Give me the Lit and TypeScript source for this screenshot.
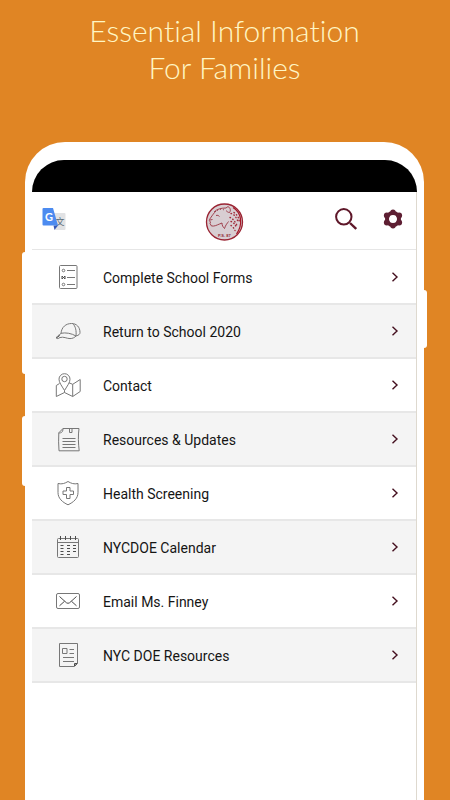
import { LitElement, html, svg, css } from "lit";
import { customElement, property } from "lit/decorators.js";

const icons: Record<string, unknown> = {
  forms: svg`
    <rect x="4.500" y="1.500" width="17.500" height="23" rx="1"/>
    <circle cx="8.500" cy="6.500" r="1.300"/><circle cx="8.500" cy="20.500" r="1.300"/>
    <path d="M12 6.500h8M12 13.500h8M12 20.500h8"/>
    <path class="dark" d="M7 12l3 3M10 12l-3 3M7 12v3M10 12v3"/>`,
  cap: svg`
    <path d="M6 15.500C6.500 9 11 5.500 16.500 5.500c5 0 8.500 3.500 8.500 9 0 1.500-1 2.700-4 3.500"/>
    <path d="M6 15.300c4.500-1 10.500 0 15 2.700-1.500 1.600-3.500 2.600-6 2.600-3.500 0-6-2.300-10.500-1"/>
    <path d="M6 15.500c-2 1.300-4 2.700-4.800 4.500.7 1 2.300.7 3.600-.4"/>
    <path d="M17.500 5.500c3.200 2.500 4 7.500 3.500 12.500"/>
    <path class="dark" d="M1.800 19.700l3-2.300"/>`,
  map: svg`
    <path d="M9.500 18.500C6.500 13.500 4 10.500 4 7.200a5.500 5.500 0 0 1 11 0c0 3.300-2.500 6.300-5.500 11.300z"/>
    <circle cx="9.500" cy="7" r="2.700"/>
    <path d="M4.500 11.500L1.300 13.500v11l8.200-4 8.200 4 7.500-5V7.500l-7.500 4.800-3.700-1.500M9.500 18.500v2M17.700 12.300v12.200"/>`,
  note: svg`
    <path d="M8 2.500h16c-1 7-.7 15 .2 22.300H4c-.5-6-.5-12-.2-18z"/>
    <path d="M3.800 7C6 7 8 6.500 8 2.500M14.500 3v3.500h2.500V2.500"/>
    <path d="M7.500 12.500h13M7.500 15.500h13M7.500 18.500h13M7.500 21.500h13"/>`,
  shield: svg`
    <path d="M3 3.500c4 1 7-.2 10-2 3 1.800 6 3 10 2v9c0 6-4.500 9.700-10 12.300C7.500 22.200 3 18.500 3 12.500z"/>
    <path d="M11.500 7.500h3.500v3.500h3.500v3.500H15V18.500h-3.500v-4H8V11h3.500z"/>`,
  calendar: svg`
    <rect x="2.500" y="4.500" width="21" height="19" rx="1"/>
    <path d="M2.500 8.500h21"/>
    <path class="dark" d="M5.500 2v4M10.500 2v4M15.500 2v4M20.500 2v4M5.500 11.500h3M12 11.500h3M18 11.500h3M5.500 14.500h3M12 14.500h3M18 14.500h3M5.500 17.500h3M12 17.500h3M18 17.500h3M5.500 20.500h3M12 20.500h3"/>`,
  mail: svg`
    <rect x="1.500" y="5.500" width="23" height="15" rx="1.500"/>
    <path class="dark" d="M4.500 8.500l7 6.300q1.500 1 3 0l7-6.300M4.500 17.800l5-4.500M21.500 17.800l-5-4.500"/>`,
  page: svg`
    <path d="M4.500 1.500h18v20l-3 3h-15z"/>
    <rect x="7.500" y="6.500" width="4.500" height="5"/>
    <path d="M14.500 7.500h4.500M14.500 11.500h4.500M8 15.500h11M8 19.500h11"/>
    <path class="dark" d="M19.500 24v-2.500h2.500z"/>`,
};

@customElement("menu-row")
export class MenuRow extends LitElement {
  @property() icon = "";
  @property() label = "";

  static styles = css`
    :host { display: block; }
    .row {
      display: flex;
      align-items: center;
      box-sizing: border-box;
      height: 54px;
      padding: 0 16px 0 23px;
      border-bottom: 2px solid #e7e7e7;
      color: #151515;
      text-decoration: none;
      font: 14px/20px Roboto, "Liberation Sans", sans-serif;
    }
    .icon {
      flex: none;
      width: 26px;
      height: 26px;
      margin-right: 22px;
      fill: none;
      stroke: #777;
      stroke-width: 1;
      stroke-linejoin: round;
    }
    .icon .dark { stroke: #4c4c4c; }
    .label { flex: 1; padding-top: 2px; }
    .chevron {
      flex: none;
      width: 10px;
      height: 12px;
      fill: none;
      stroke: #45101f;
      stroke-width: 1.4;
    }
  `;

  render() {
    return html`<a class="row" href="#">
      <svg class="icon" viewBox="0 0 26 26" aria-hidden="true">${icons[this.icon]}</svg>
      <span class="label">${this.label}</span>
      <svg class="chevron" viewBox="0 0 10 12" aria-hidden="true"><path d="M2.500 1.800L7 6l-4.500 4.200"/></svg>
    </a>`;
  }
}

@customElement("app-root")
export class AppRoot extends LitElement {
  static styles = css`
    :host {
      display: flex;
      flex-direction: column;
      box-sizing: border-box;
      min-height: 100vh;
      padding: 0 26px 0 25px;
      background: #e08524;
    }
    .title {
      margin: 0;
      padding: 12px 0 56px;
      color: #fff6c4;
      font: 300 30px/37px Lato, "Open Sans", sans-serif;
      font-variant-ligatures: none;
      text-align: center;
    }
    .title span { display: block; }
    .phone {
      position: relative;
      display: flex;
      flex: 1;
      flex-direction: column;
      padding: 18px 7px 0;
      border-radius: 40px 40px 0 0;
      background: #fff;
    }
    .key {
      position: absolute;
      width: 6px;
      background: #fff;
      border-radius: 3px;
    }
    .volume { left: -3px; top: 110px; height: 122px; }
    .assist { left: -3px; top: 274px; height: 70px; }
    .power { right: -3px; top: 148px; height: 58px; }
    .status {
      height: 32px;
      border-radius: 32px 32px 0 0;
      background: #000;
    }
    .screen {
      flex: 1;
      border-right: 1px solid #ded9cf;
    }
    .bar {
      display: grid;
      grid-template-columns: 1fr auto 1fr;
      align-items: center;
      height: 57px;
      padding: 0 9px;
      border-bottom: 1px solid #e6e6e6;
    }
    .button {
      display: block;
      margin: 0;
      padding: 0;
      border: 0;
      background: none;
    }
    .button svg, .crest { display: block; }
    .tools {
      display: flex;
      justify-content: flex-end;
      gap: 26px;
      padding: 0 4px 3px 0;
    }
    .translate { padding: 0 0 3px 1px; }
    .crest { margin-top: 3px; }
    .glyph { font: 700 11px Lato, sans-serif; fill: #fff; }
    .han { font: 9px "Noto Sans CJK SC", sans-serif; fill: #596b78; }
    .school { font: 700 4px "Liberation Sans", sans-serif; fill: #8e2635; }
    .list { margin: 0; padding: 1px 0 0; list-style: none; }
    .list li:nth-child(even) { background: #f4f4f4; }
  `;

  private items = [
    { icon: "forms", label: "Complete School Forms" },
    { icon: "cap", label: "Return to School 2020" },
    { icon: "map", label: "Contact" },
    { icon: "note", label: "Resources & Updates" },
    { icon: "shield", label: "Health Screening" },
    { icon: "calendar", label: "NYCDOE Calendar" },
    { icon: "mail", label: "Email Ms. Finney" },
    { icon: "page", label: "NYC DOE Resources" },
  ];

  render() {
    return html`
      <h1 class="title"><span>Essential Information</span><span>For Families</span></h1>
      <main class="phone">
        <i class="key volume"></i><i class="key assist"></i><i class="key power"></i>
        <div class="status"></div>
        <div class="screen">
          <header class="bar">
            <div>
              <button class="button translate" aria-label="Translate">
                <svg width="24" height="24" viewBox="0 0 24 24">
                  <path fill="#e1e2e4" d="M11 6h11.500q1 0 1 1v15q0 1-1 1H13z"/>
                  <text class="han" x="13.500" y="17.500">文</text>
                  <path fill="#3557b5" d="M11.500 18.500h4.500l-3.500 4.500z"/>
                  <path fill="#4c8bf0" d="M1.500 1h9.500l5 17.500H1.500q-1 0-1-1V2q0-1 1-1z"/>
                  <text class="glyph" x="3" y="13.500">G</text>
                </svg>
              </button>
            </div>
            <svg class="crest" width="39" height="38" viewBox="0 0 39 38" role="img" aria-label="School crest">
              <circle cx="19.500" cy="19" r="18" fill="#d8ced2" stroke="#9a2433" stroke-width="1.300"/>
              <g fill="none" stroke="#98323f" stroke-width="0.900">
                <path d="M11 8c-2 2-3.500 4-5.500 7-1 1.500-1.500 2-1 3l1 1-.5 1.500 1.500 2.500c3 .5 5.500-1 8-2l2.500-1c0 2.500 1 4 2.500 5.500 1-3.500 3-5.500 4-7"/>
                <path d="M9 9c3-3 7-4 12-4l2-1.500c2.500 1.500 3 4 1.500 6-1.500 0-2.500-1-3.500-2"/>
                <path d="M11 12.500c1.500-.5 2.500 0 3.500 1M5 17l2.500-.5"/>
                <path stroke-dasharray="1 2" d="M12 7.500c3-1.500 6-1.500 8 0"/>
              </g>
              <path fill="none" stroke="#a51525" stroke-width="1.200" d="M28 4.500C37 10 38 22 31.500 31"/>
              <g fill="none" stroke="#a02a3a" stroke-width="1.400" stroke-linecap="round" stroke-dasharray="0.500 2.700">
                <path d="M26 10.500c4 1 5 4 7 8M25 14.500c3 1 5 4 7 8M26 18.500c3 1 4 3 6 7M26 22.500c2 1 3 3 4 5M29 9.500c4 3 5 6 5.500 10"/>
              </g>
              <text class="school" x="13" y="34">P.S. 87</text>
            </svg>
            <div class="tools">
              <button class="button" aria-label="Search">
                <svg width="22" height="22" viewBox="0 0 22 22" fill="none" stroke="#5e1729">
                  <circle cx="8.800" cy="8.800" r="7.700" stroke-width="2"/>
                  <path d="M15 15l6.200 6" stroke-width="2.400"/>
                </svg>
              </button>
              <button class="button" aria-label="Settings">
                <svg width="20" height="20" viewBox="0 0 20 20" fill="#5e1f33">
                  <circle cx="10" cy="10" r="6" fill="none" stroke="#5e1f33" stroke-width="4"/>
                  <circle cx="10" cy="3.300" r="2.700"/><circle cx="10" cy="16.700" r="2.700"/>
                  <circle cx="3.800" cy="6.500" r="2.900"/><circle cx="16.200" cy="6.500" r="2.900"/>
                  <circle cx="3.800" cy="13.500" r="2.900"/><circle cx="16.200" cy="13.500" r="2.900"/>
                </svg>
              </button>
            </div>
          </header>
          <ul class="list">
            ${this.items.map((i) => html`<li><menu-row icon=${i.icon} label=${i.label}></menu-row></li>`)}
          </ul>
        </div>
      </main>
    `;
  }
}
